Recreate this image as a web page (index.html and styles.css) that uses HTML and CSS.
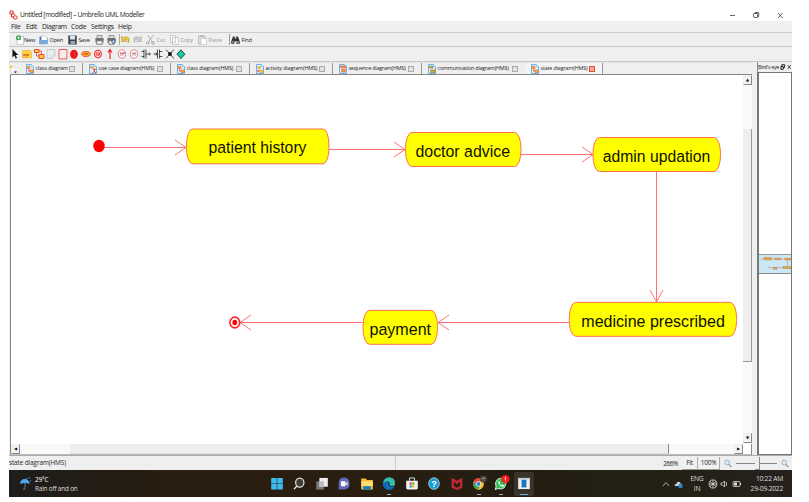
FILE: index.html
```html
<!DOCTYPE html>
<html lang="en">
<head>
<meta charset="utf-8">
<title>Untitled [modified] – Umbrello UML Modeller</title>
<link rel="stylesheet" href="styles.css">
</head>
<body>
<svg class="defs" width="0" height="0">
  <symbol id="page" viewBox="0 0 9 11"><path d="M.5.5h5.5l2.500 2.500v7.500h-8z" fill="#e4f3fd" stroke="#4da7e0"/><path d="M6 .5v2.500h2.500" fill="#fff" stroke="#4da7e0" stroke-width=".6"/></symbol>
  <symbol id="d-class" viewBox="0 0 9 11"><use href="#page"/><path d="M1.500 2.500h3v2.500h-3zM4.500 6.500h3.500v3h-3.500z" fill="#ffb52e" stroke="#e0552f" stroke-width=".6"/><path d="M3 5v3h1.500" fill="none" stroke="#d22" stroke-width=".7"/></symbol>
  <symbol id="d-use" viewBox="0 0 9 11"><use href="#page"/><ellipse cx="3.200" cy="3.600" rx="2" ry="1.300" fill="#ffb52e" stroke="#d66c20" stroke-width=".5"/><path d="M6 5v3M4.500 6h3M6 8l-1.800 2M6 8l1.800 2" fill="none" stroke="#d22"/></symbol>
  <symbol id="d-act" viewBox="0 0 9 11"><use href="#page"/><path d="M2 3h3v2h-3zM4 7h4v2.500h-4z" fill="#ffc832" stroke="#e78c20" stroke-width=".6"/><circle cx="2.500" cy="7.500" r="1" fill="#d22"/></symbol>
  <symbol id="d-seq" viewBox="0 0 9 11"><use href="#page"/><path d="M1.500 2h2.500v2h-2.500zM5 2h2.500v2h-2.500zM3 5.500h4v3.500h-4z" fill="#f4a33c" stroke="#d8432c" stroke-width=".6"/></symbol>
  <symbol id="d-com" viewBox="0 0 9 11"><use href="#page"/><path d="M1.500 2.500h4v2h-4zM3 6.500h5v3h-5z" fill="#d9b12d" stroke="#94752a" stroke-width=".7"/></symbol>
  <symbol id="printer" viewBox="0 0 9 10"><path d="M2 .5h5v3h-5z" fill="#ddd" stroke="#777" stroke-width=".7"/><path d="M.3 3.500h8.400v4h-8.400z" fill="#8a8a8a"/><path d="M1.800 5.700h5.400v3.600h-5.400z" fill="#f5f5f5" stroke="#555" stroke-width=".7"/><path d="M.5 4h8" stroke="#444" stroke-width=".8"/></symbol>
  <symbol id="magnify" viewBox="0 0 8 9"><circle cx="3.200" cy="3.500" r="2.400" fill="#dceaf5" stroke="#93adc2" stroke-width=".9"/><path d="M5 5.300l2.300 2.700" stroke="#8e989f" stroke-width="1.300"/></symbol>
</svg>

<main class="window">
  <header class="titlebar">
    <svg class="logo" viewBox="0 0 9 10"><path d="M1 1h3v3h-3zM2.500 4v3h2.500M4 2.500l2 3" fill="none" stroke="#e12c22"/><ellipse cx="6.300" cy="7.500" rx="2" ry="1.700" fill="none" stroke="#e12c22"/></svg>
    <h1>Untitled [modified] – Umbrello UML Modeller</h1>
    <svg class="controls" viewBox="0 0 56 10"><g fill="none" stroke="#333" stroke-width=".75"><path d="M0 5.500h5"/><rect x="23.600" y="3.500" width="4" height="4" rx=".6"/><path d="M25 3.500v-1h3.700v4h-1"/><path d="M48 3l4.600 5M52.600 3l-4.600 5"/></g></svg>
  </header>

  <nav class="menu"><span class="m1">File</span><span class="m2">Edit</span><span class="m3">Diagram</span><span class="m4">Code</span><span class="m5">Settings</span><span>Help</span></nav>

  <section class="toolbar">
    <div class="tool new"><svg viewBox="0 0 9 10"><path d="M2 1.500h6.500v8h-6.500z" fill="#fff" stroke="#aaa" stroke-width=".6"/><circle cx="3.500" cy="2.800" r="2.500" fill="#2c9d45"/><path d="M2 2.800h3M3.500 1.300v3" stroke="#fff" stroke-width=".8"/></svg>New</div>
    <div class="tool open"><svg viewBox="0 0 9 10"><path d="M.5 1.500h3l1 1h4v6.500h-8z" fill="#5381ba"/><path d="M2.500 1h4l1.500 1.500v3h-5.500z" fill="#fff" stroke="#abc" stroke-width=".4"/><path d="M0 5h9l-.8 4.300h-7.700z" fill="#76a8df"/></svg>Open</div>
    <div class="tool save"><svg viewBox="0 0 9 10"><path d="M.3.5h8.400v9h-8.400z" fill="#3c454e"/><path d="M2 .7h5v3.800h-5z" fill="#dce6ed"/><path d="M2.500 6h4.500v3.500h-4.500z" fill="#99a6b1"/></svg>Save</div>
    <div class="tool print"><svg viewBox="0 0 9 10"><use href="#printer"/></svg></div>
    <div class="tool preview"><svg viewBox="0 0 9 10"><use href="#printer"/><circle cx="6.500" cy="6.500" r="1.700" fill="#c9ddf5" stroke="#357"/></svg></div>
    <div class="tool undo"><svg viewBox="0 0 9 10"><path d="M.5 1v5.500h5l-1.600-1.800c2-1 3.500 0 3.200 3.300 2.200-3.400 1-6.500-2.200-6.200-1.200.1-2 .5-2.700 1.100z" fill="#f0c33d" stroke="#b18b1e" stroke-width=".5"/></svg></div>
    <div class="tool redo"><svg viewBox="0 0 9 10"><path d="M8.500 1v5.500h-5l1.600-1.800c-2-1-3.500 0-3.200 3.300-2.200-3.400-1-6.500 2.200-6.200 1.200.1 2 .5 2.700 1.100z" fill="#c9c9c9" stroke="#a8a8a8" stroke-width=".5"/></svg></div>
    <div class="tool cut off"><svg viewBox="0 0 9 10"><path d="M1.500 0l5 7M7 0l-4.500 7" stroke="#aaa" stroke-width=".9"/><circle cx="1.700" cy="8" r="1.300" fill="none" stroke="#aaa"/><circle cx="7" cy="8" r="1.300" fill="none" stroke="#aaa"/></svg>Cut</div>
    <div class="tool copy off"><svg viewBox="0 0 9 10"><path d="M.5.5h5v7h-5zM2.500 2.500h6v7h-6z" fill="#fafafa" stroke="#bbb" stroke-width=".7"/></svg>Copy</div>
    <div class="tool paste off"><svg viewBox="0 0 9 10"><path d="M.5 1h6.500v8h-6.500z" fill="#e2e2e2" stroke="#aaa" stroke-width=".7"/><path d="M2.500.5h2.500v1.500h-2.500z" fill="#aaa"/><path d="M3 3.500h5.500v6h-5.500z" fill="#fff" stroke="#bbb" stroke-width=".7"/></svg>Paste</div>
    <div class="tool find"><svg viewBox="0 0 9 10"><path d="M2 1.500h1.800v2h1.400v-2h1.800l1.800 5v2.200h-3.300v-2.500h-2v2.500h-3.300v-2.200z" fill="#353535"/><circle cx="1.900" cy="6.900" r="1" fill="#999"/><circle cx="7.100" cy="6.900" r="1" fill="#999"/></svg>Find</div>
  </section>

  <section class="palette">
    <svg viewBox="0 0 12 12"><path d="M3.500 1v8.500l2-2 1.300 3.200 1.300-.7-1.300-3h2.500z" fill="#111"/></svg>
    <svg class="xyz" viewBox="0 0 12 12"><path d="M1.500 2.500h8l1 2v5.500h-9z" fill="#ffd53e" stroke="#eea72d" stroke-width=".6"/><text x="2" y="8.200">xyz</text></svg>
    <svg viewBox="0 0 12 12"><path d="M1.500 1.500h4.500v3h-4.500zM6 6.500h5v4h-5z" fill="#ffd03d" stroke="#e03428" stroke-width=".9"/><path d="M3.500 4.500v3.500h2.500M6 3h2.500v3.500" fill="none" stroke="#e03428" stroke-width=".8"/></svg>
    <svg viewBox="0 0 12 12"><path d="M2 1.500h8v6.500l-2.500 2.500h-5.500z" fill="#e9edf0" stroke="#a9b0b5" stroke-width=".6"/><path d="M7.500 10.500v-2.500h2.500" fill="#fff" stroke="#a9b0b5" stroke-width=".6"/></svg>
    <svg viewBox="0 0 12 12"><path d="M2 1.500h8v9.500h-8z" fill="#f5eeee" stroke="#ef3434" stroke-width=".8"/></svg>
    <svg viewBox="0 0 12 12"><ellipse cx="6" cy="6.200" rx="3.900" ry="4.600" fill="#f31414"/><path d="M6.300 4v4.500" stroke="#b35858"/></svg>
    <svg viewBox="0 0 12 12"><ellipse cx="6" cy="6" rx="4.400" ry="2.500" fill="#ffad26" stroke="#df3a24" stroke-width=".8"/><path d="M3.700 6h4.500" stroke="#a05920" stroke-width="1.200"/></svg>
    <svg viewBox="0 0 12 12"><ellipse cx="6" cy="6" rx="3.500" ry="4" fill="#f8d2d2" stroke="#ec2222"/><circle cx="6" cy="6" r="2.100" fill="#ed3333"/><path d="M7 4.900q-2-.8-2 1t2 1" fill="none" stroke="#fff" stroke-width=".6"/></svg>
    <svg viewBox="0 0 12 12"><path d="M6 11v-9M4 4.500l2-3 2 3" fill="none" stroke="#ef1a1a" stroke-width="1.100"/></svg>
    <svg class="hist" viewBox="0 0 12 12"><ellipse cx="6" cy="6" rx="3.600" ry="4.200"/><text x="4" y="8">H*</text></svg>
    <svg class="hist" viewBox="0 0 12 12"><ellipse cx="6" cy="6" rx="3.600" ry="4.200"/><text x="4.300" y="8">H</text></svg>
    <svg viewBox="0 0 12 12"><path d="M6 1.500v9M4 1.500v9M1.500 3.500h2.500M1.500 8.500h2.500M6 6h4.500M9 4.700l1.500 1.300-1.500 1.300" fill="none" stroke="#222" stroke-width=".8"/></svg>
    <svg viewBox="0 0 12 12"><path d="M5.500 1.500v9M7.500 1.500v9M7.500 3.500h3M7.500 8.500h3M1.500 6h4M3.700 4.700l1.500 1.300-1.500 1.300" fill="none" stroke="#222" stroke-width=".8"/></svg>
    <svg viewBox="0 0 12 12"><path d="M2 1.500l8 9M10 1.500l-8 9" stroke="#222" stroke-width=".8"/><circle cx="6" cy="6" r="1.900" fill="#111"/></svg>
    <svg viewBox="0 0 12 12"><path d="M6 1.800l4 4.400-4 4.400-4-4.400z" fill="#16caa8" stroke="#143d35" stroke-width=".9"/></svg>
  </section>

  <section class="work">
    <div class="editor">
      <div class="tabs">
        <svg class="newtab" viewBox="0 0 9 10"><path d="M2 3h4v5h-4z" fill="#fff" stroke="#ccc" stroke-width=".5"/><circle cx="2" cy="3" r="1.400" fill="#f3c44b"/><path d="M5 7.500h3l-1.500 1.800z" fill="#222"/></svg>
        <div class="tab t1"><svg><use href="#d-class"/></svg><span>class diagram</span><i></i></div>
        <div class="tab t2"><svg><use href="#d-use"/></svg><span>use case diagram(HMS)</span><i></i></div>
        <div class="tab t3"><svg><use href="#d-class"/></svg><span>class diagram(HMS)</span><i></i></div>
        <div class="tab t4"><svg><use href="#d-act"/></svg><span>activity diagram(HMS)</span><i></i></div>
        <div class="tab t5"><svg><use href="#d-seq"/></svg><span>sequence diagram(HMS)</span><i></i></div>
        <div class="tab t6"><svg><use href="#d-com"/></svg><span>communication diagram(HMS)</span><i></i></div>
        <div class="tab t7 active"><svg><use href="#d-class"/></svg><span>state diagram(HMS)</span><i></i></div>
      </div>
      <div class="view">
        <svg class="diagram" viewBox="11 75 732 368">
          <g class="wire">
            <path d="M104 147.500H186M175 140l11 7.500-11 7.500"/>
            <path d="M329 149.500H405M394 142l11 7.500-11 7.500"/>
            <path d="M521 154.500H593M582 147l11 7.500-11 7.500"/>
            <path d="M656.500 171V302M650 290l6.500 12 6.500-12"/>
            <path d="M569 322.500H438M449 315l-11 7.500 11 7.500"/>
            <path d="M363 322.500H240M251 315l-11 7.500 11 7.500"/>
          </g>
          <ellipse cx="99" cy="146" rx="5.700" ry="6.200" fill="#f00"/>
          <ellipse cx="234.800" cy="322.500" rx="4.900" ry="5.400" fill="#fff" stroke="#f22" stroke-width="1.600"/>
          <ellipse cx="234.800" cy="322.500" rx="2.400" ry="2.700" fill="#f00"/>
          <g class="state">
            <rect x="186.500" y="129" width="142.500" height="34.800" rx="6" ry="16"/>
            <rect x="405.500" y="132.500" width="115.500" height="34" rx="6.500" ry="16"/>
            <rect x="593" y="137.500" width="127.500" height="34" rx="6.500" ry="16"/>
            <rect x="569.300" y="302.300" width="167.300" height="34" rx="6.500" ry="16"/>
            <rect x="363" y="310.300" width="74.500" height="34" rx="6.500" ry="16"/>
          </g>
          <g class="name">
            <text x="208.500" y="152.900" textLength="98" lengthAdjust="spacingAndGlyphs">patient history</text>
            <text x="415.500" y="156.900" textLength="94.500" lengthAdjust="spacingAndGlyphs">doctor advice</text>
            <text x="602.800" y="161.900" textLength="107.500" lengthAdjust="spacingAndGlyphs">admin updation</text>
            <text x="581.300" y="326.500" textLength="143.500" lengthAdjust="spacingAndGlyphs">medicine prescribed</text>
            <text x="369.500" y="334.500" textLength="61.500" lengthAdjust="spacingAndGlyphs">payment</text>
          </g>
        </svg>
        <div class="vscroll"><b class="btn">▲</b><div class="thumb"></div><b class="btn">▼</b></div>
        <div class="hscroll"><b class="btn">◀</b><div class="thumb"></div><b class="btn">▶</b></div>
      </div>
    </div>
    <aside class="dock">
      <div class="dock-title"><span>Bird's eye</span><svg viewBox="0 0 13 8"><path d="M1 3.500h2.500v3h-2.500zM2 3v-1.500h3v3h-1.500" fill="none" stroke="#111"/><path d="M8.500 2l3 4M11.500 2l-3 4" stroke="#222" stroke-width=".9"/></svg></div>
      <div class="bird">
        <svg viewBox="0 0 34 20"><g stroke="#d9706d" stroke-width=".6"><path d="M1 4.500h32M31 5v9M9 14h23" fill="none"/><g fill="#c9bc35"><rect x="5" y="3" width="8" height="2.500"/><rect x="17" y="3.300" width="6" height="2"/><rect x="28" y="3.500" width="7" height="2"/><rect x="26" y="13" width="9" height="2.200"/><rect x="15" y="13.700" width="4" height="2"/></g></g></svg>
      </div>
    </aside>
  </section>

  <footer class="status">
    <span class="where">state diagram(HMS)</span>
    <span class="pct">266%</span><button class="fit">Fit</button><button class="full">100%</button>
    <svg class="mag"><use href="#magnify"/></svg>
    <div class="slider"><i></i></div>
    <svg class="mag"><use href="#magnify"/></svg>
  </footer>

  <section class="taskbar">
    <svg class="rain" viewBox="0 0 13 15"><path d="M.8 8q1-5 5-5t5 5q-5-2-10 0" fill="#4ba9ee"/><path d="M6 7v5q-.3 2-2 1.200" fill="none" stroke="#8b9095" stroke-width=".8"/><path d="M7 2l1 1M10 1v2M11 4l1 1.500" stroke="#3a81c7"/></svg>
    <div class="weather"><span class="temp">29°C</span><span>Rain off and on</span></div>
    <div class="apps">
      <svg viewBox="0 0 14 16"><path d="M1 2h5.700v5.700h-5.700zM7.300 2h5.700v5.700h-5.700zM1 8.300h5.700v5.700h-5.700zM7.300 8.300h5.700v5.700h-5.700z" fill="#3cbdf0"/></svg>
      <svg viewBox="0 0 14 16"><ellipse cx="7.800" cy="6.800" rx="4.300" ry="4.700" fill="#433b35" stroke="#ddd" stroke-width="1.300"/><path d="M4.800 10.300l-3 3.400" stroke="#ddd" stroke-width="1.400"/></svg>
      <svg viewBox="0 0 14 16"><path d="M1 5.500h8v8.500h-8z" fill="#777"/><path d="M4.300 2h8.700v9h-8.700z" fill="#eee"/><path d="M4.300 5.500h4.700v5.500h-4.700z" fill="#bbb"/></svg>
      <svg viewBox="0 0 14 16"><path d="M1.500 14V7q.3-5.500 5.500-5.500T12.700 7.500 7 14z" fill="#6567bd"/><rect x="3.800" y="5.500" width="4.800" height="5" rx=".8" fill="#fff"/><path d="M8.500 7.500l2.300-1.500v4l-2.300-1.500z" fill="#ddd"/></svg>
      <svg viewBox="0 0 14 16"><path d="M1 2.500h4.500l1.500 1.700h6v9.800h-12z" fill="#f7bd2d"/><path d="M1 5.500h12v5h-12z" fill="#ffdc71"/><path d="M3 14v-3.500h8v3.500z" fill="#1679ca"/></svg>
      <svg viewBox="0 0 14 16"><ellipse cx="7" cy="7.800" rx="6.200" ry="6.500" fill="#117dce"/><path d="M1 8q.5-6.500 6.500-6.500 5.500.2 5.700 6-.4 2.800-3.700 2.800-2.200-.1-1.300-1.800.5-2.200-1.700-3-3.500-.5-5.500 2.500" fill="#37bfa2"/><path d="M1 8q2-3 5-2.500-2.500 2.200-.5 5.300 2.500 2.500 6 .8-3.300 4-7.700 2-3-2-2.800-5.600" fill="#1367b2"/><path d="M6.500 6q-1 2 .8 4.200 2 1.200 4 .6" fill="none" stroke="#261e12"/></svg>
      <svg viewBox="0 0 14 16"><path d="M1 5h12v7.500q0 1.500-1.500 1.500h-9q-1.500 0-1.500-1.500z" fill="#f1f2f2"/><path d="M4.500 5v-3h5v3" fill="none" stroke="#cbe1ee"/><path d="M4.500 6.500h2.200v2.500h-2.200z" fill="#ef4b32"/><path d="M7.200 6.500h2.200v2.500h-2.200z" fill="#75b829"/><path d="M4.500 9.500h2.200v2.500h-2.200z" fill="#209fe1"/><path d="M7.200 9.500h2.200v2.500h-2.200z" fill="#f9b91e"/></svg>
      <svg class="help" viewBox="0 0 14 16"><ellipse cx="7" cy="7.800" rx="5.500" ry="6" fill="#159bd5" stroke="#d9eef8" stroke-width=".7"/><text x="4.200" y="11.200">?</text></svg>
      <svg viewBox="0 0 14 16"><path d="M1.500 1.800L7 4.800l5.500-3v10.200L7 14.500 1.500 12z" fill="#c52934"/><path d="M3.800 5.500L7 8.800l3.200-3.300v5.200L7 12.200l-3.200-1.500z" fill="#261e12"/></svg>
      <svg viewBox="0 0 14 16"><ellipse cx="6.500" cy="8.200" rx="5.500" ry="6" fill="#f4c52a"/><path d="M1.700 5.200Q3.500 2 6.500 2.200q4 .2 5.200 3.500H6.500l-2.500 4z" fill="#e84336"/><path d="M1.700 5.200q-2.400 6.500 4 9l2.500-4-4.500-1z" fill="#2ca653"/><circle cx="6.500" cy="8.200" r="2.500" fill="#3679da" stroke="#fff" stroke-width=".8"/><circle cx="11.500" cy="3.200" r="3.500" fill="#4b4544"/><path d="M9.500 3l4-1" stroke="#a3a1a0"/></svg>
      <svg class="wa" viewBox="0 0 14 16"><path d="M1 14l.9-3Q.2 7 3 3.800q4-3.200 7.800.3Q13.500 8 10.500 12q-3 2.400-6.500.9z" fill="#36bd54" stroke="#e9f5e9" stroke-width=".9"/><path d="M4.300 5.500l1-.4.8 1.800-.5.7q.8 1.500 2.200 2l.8-.8 1.500.8-.5 1.300q-3 .7-5.300-3.500z" fill="#fff"/><circle cx="11.500" cy="3.200" r="4.300" fill="#f51c1c"/><path d="M11.500.8v3.200M11.500 4.700v1" stroke="#fff" stroke-width=".9"/></svg>
      <svg class="current" viewBox="0 0 14 16"><path d="M1 2h12v11.500h-12z" fill="#eee"/><path d="M4.500 3.800h5v8h-5z" fill="#1978bd"/><path d="M1 2h12v1.500h-12z" fill="#bfc9cf"/></svg>
    </div>
    <div class="tray">
      <svg class="cloud" viewBox="0 0 23 12"><path d="M1 8l3-3.500 3 3.500" fill="none" stroke="#ccc" stroke-width=".8"/><path d="M12.500 8q0-2 2-2.200Q15 3 17.500 4q1 .5 1 1.500 2 .2 1.500 2.800z" fill="#c9d1d7"/><ellipse cx="18.500" cy="8" rx="2.200" ry="2.300" fill="#238bd2"/></svg>
      <span class="lang">ENG<br>IN</span>
      <svg class="sys" viewBox="0 0 34 12"><g fill="none" stroke="#ddd" stroke-width=".8"><ellipse cx="5" cy="6" rx="3.900" ry="4.100"/><path d="M1 6h8M5 2v8M2 3.500l6 5M8 3.500l-6 5"/><path d="M13 5h1.500l2-2v6l-2-2h-1.500zM18 4q1.300 2 0 4"/><rect x="25" y="3.500" width="7" height="5" rx="1"/></g><path d="M26 4.500h3v3h-3zM32 5h1v2h-1z" fill="#ddd"/></svg>
      <span class="clock">10:22 AM<br>29-09-2022</span>
    </div>
  </section>
</main>
</body>
</html>
```
FILE: styles.css
```css
* { box-sizing: border-box; }
body { margin: 0; padding: 9px; background: #fff; font-family: "Open Sans", "Noto Sans", sans-serif; color: #222; overflow: hidden; }
svg { display: block; flex: none; }
.apps svg { overflow: visible; }
.defs { position: absolute; }
.window { width: 783px; height: 488px; display: flex; flex-direction: column; white-space: nowrap; background: #efefef; }

.titlebar { height: 12px; display: flex; align-items: center; background: #fff; }
.logo { width: 9px; height: 10px; }
h1 { margin: 0 0 0 2px; font-size: 6.7px; font-weight: 400; line-height: 12px; letter-spacing: -.37px; flex: 1; }
.controls { width: 56px; height: 10px; margin-right: 6px; }

.menu { height: 12px; display: flex; padding-left: 2px; font-size: 6.800px; line-height: 12px; letter-spacing: -.3px; border-bottom: 1px solid #ccc; }
.m1 { width: 15px; }
.m2 { width: 16px; }
.m3 { width: 29px; }
.m4 { width: 20px; }
.m5 { width: 27px; }

.toolbar { height: 14px; display: flex; align-items: center; padding-left: 6px; border-bottom: 1px solid #c5c5c5; font-size: 5.6px; letter-spacing: -.22px; }
.tool { display: flex; align-items: center; gap: 1.5px; height: 11px; }
.tool svg { width: 9px; height: 10px; }
.new { width: 24px; gap: 0; }
.open { width: 29px; }
.save { width: 27px; }
.print, .preview { width: 12px; }
.undo { width: 14px; border-left: 1px solid #aaa; padding-left: 1px; }
.redo { width: 13px; }
.cut { width: 24px; }
.copy { width: 28px; }
.paste { width: 31px; }
.find { border-left: 1px solid #999; padding-left: 1px; }
.off { color: #9b9b9b; }

.palette { height: 15px; display: flex; align-items: center; border-bottom: 1px solid #c8c8c8; }
.palette svg { width: 11.900px; height: 12px; }
.xyz text { font: 700 4px "Liberation Sans", sans-serif; fill: #c32e20; }
.hist ellipse { fill: #fff; stroke: #d66; stroke-width: .8px; }
.hist text { font: 5px "Liberation Sans", sans-serif; fill: #811; letter-spacing: -.6px; }

.work { height: 393px; display: flex; }
.editor { width: 744px; display: flex; flex-direction: column; }
.tabs { height: 12px; display: flex; border-top: 1px solid #e2e2e2; }
.newtab { width: 9px; height: 10px; margin: 1px 2px 0 0; }
.tab { height: 11px; display: flex; align-items: center; padding: 0 7px 0 6px; border-right: 1px solid #999; font-size: 5.4px; letter-spacing: -.14px; }
.tab svg { width: 8px; height: 10px; }
.tab span { flex: 1; margin-left: 1.5px; line-height: 11px; }
.tab i { width: 6px; height: 6px; border: 1px solid #aaa; background: #e2e2e2; flex: none; }
.t1 { width: 63px; }
.t2 { width: 88px; }
.t3 { width: 79px; }
.t4 { width: 83px; }
.t5 { width: 89px; letter-spacing: -.2px; }
.t6 { width: 103px; border-right: 0; letter-spacing: -.2px; }
.t7 { width: 78px; }
.active { background: #f4f4f4; }
.tab.active i { background: #f6aa96; border: 1.500px solid #d9512f; }

.view { height: 381px; display: grid; grid-template: 369px 10px / 732px 9px; border: 1px solid #888; border-bottom-color: #bbb; margin: 0 1px; background: #fff; }
.diagram { width: 732px; height: 368px; }
.wire path { fill: none; stroke: #ff7373; stroke-width: 1px; }
.state rect { fill: #ff0; stroke: #ff7048; stroke-width: 1px; }
.name text { font: 17.400px "Liberation Sans", Arial, sans-serif; fill: #111100; }
.btn { display: grid; place-items: center; width: 9px; height: 10px; background: #f3f3f3; border: 1px solid #eee; border-right-color: #888; border-bottom-color: #888; font: 4px/1 "DejaVu Sans", sans-serif; color: #000; flex: none; }
.vscroll { display: flex; flex-direction: column; background: #f9f9f9; }
.vscroll .thumb { height: 233px; margin: 44px 0 71px; background: #eee; border-right: 1px solid #999; border-bottom: 1px solid #999; }
.hscroll { display: flex; background: #f9f9f9; }
.hscroll .thumb { width: 599px; margin: 0 65px 0 50px; background: #eee; border-right: 1px solid #888; border-bottom: 1px solid #ddd; flex: none; }

.dock { width: 35px; margin-left: 4px; }
.dock-title { height: 10px; display: flex; align-items: center; justify-content: space-between; font-size: 5.4px; letter-spacing: -.33px; border-left: 1px solid #888; }
.dock-title span { line-height: 9px; }
.dock-title svg { width: 12px; height: 8px; }
.bird { height: 383px; padding-top: 181px; background: #fff; border: 1px solid #777; border-left-width: 2px; }
.bird svg { width: 32px; height: 20px; background: #c9e9f7; border-top: 1px solid #999; border-bottom: 1px solid #888; }

.status { height: 15px; display: flex; align-items: center; font-size: 6.4px; letter-spacing: -.07px; border-top: 1px solid #aaa; }
.where { width: 387px; border-right: 1px solid #ccc; line-height: 14px; letter-spacing: -.1px; }
.pct { width: 286px; text-align: right; padding-right: 4px; letter-spacing: -.35px; }
.status button { height: 13px; padding: 0; font: inherit; letter-spacing: -.2px; color: inherit; background: #f1f1f1; border: 0; border-bottom: 1px solid #999; border-right: 1px solid #aaa; }
.status .fit { width: 16px; }
.status .full { width: 22px; }
.mag { width: 8px; height: 9px; margin-left: 4px; }
.slider { width: 41px; height: 13px; margin-left: 4px; background: linear-gradient(#888, #888) 0 6px / 100% 1px no-repeat; }
.slider i { display: block; width: 5px; height: 13px; margin-left: 19px; background: #efefef; border-right: 1px solid #888; border-bottom: 1px solid #888; }

.taskbar { height: 27px; display: flex; align-items: center; background: linear-gradient(90deg, #1e1d1b, #281d10 20%, #2a1e10 35%, #241e12 65%, #242015 85%, #26211e); color: #ddd; }
.rain { width: 13px; height: 15px; margin-left: 10px; }
.weather { width: 230px; padding-left: 3px; display: flex; flex-direction: column; font-size: 6.4px; line-height: 9px; letter-spacing: -.18px; }
.temp { color: #fff; }
.apps { display: flex; gap: 2.440px; margin-left: 5px; }
.apps svg { width: 20px; height: 24px; padding: 4px 2.500px 4.500px; border-radius: 2px; }
.apps svg:nth-child(6), .apps svg:nth-child(10), .apps svg:nth-child(11) { background: linear-gradient(#aaa, #aaa) 50% 22px / 4px 1px no-repeat; }
.apps .current { background: linear-gradient(#60b5df, #60b5df) 50% 22px / 8px 1px no-repeat #39332a; }
.help text { font: 700 9.500px "Liberation Sans", sans-serif; fill: #fff; }
.tray { margin-left: auto; display: flex; align-items: center; font-size: 6.7px; line-height: 9.500px; letter-spacing: -.25px; padding-right: 9px; }
.cloud { width: 23px; height: 12px; }
.lang { width: 18px; margin-left: 3px; text-align: center; }
.sys { width: 34px; height: 12px; margin-left: 2px; }
.clock { width: 41px; text-align: right; }
```
